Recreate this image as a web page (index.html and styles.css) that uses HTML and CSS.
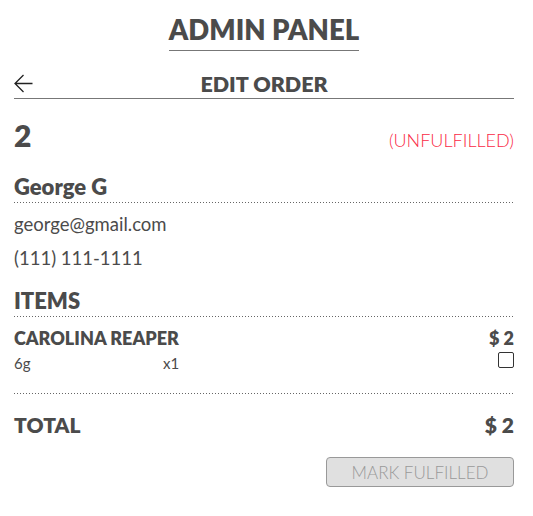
FILE: index.html
```html
<!DOCTYPE html>
<html>
<head>
<meta charset="utf-8">
<link rel="stylesheet" href="styles.css">
</head>
<body>
<div class="page">
  <div class="brand"><h1 class="brand-title">ADMIN PANEL</h1></div>
  <div class="topbar">
    <span class="back">
      <svg width="19" height="19" viewBox="0 0 19 19"><path d="M18.5 9.5H1M9.5 1L1 9.5l8.5 8.5" fill="none" stroke="#222" stroke-width="1.3"/></svg>
    </span>
    <h2 class="topbar-title">EDIT ORDER</h2>
  </div>
  <div class="order-row">
    <span class="order-id">2</span>
    <span class="status">(UNFULFILLED)</span>
  </div>
  <h3 class="section-title name-title">George G</h3>
  <div class="info email">george@gmail.com</div>
  <div class="info phone">(111) 111-1111</div>
  <h3 class="section-title items-title">ITEMS</h3>
  <div class="item">
    <div class="item-row">
      <span class="item-name">CAROLINA REAPER</span>
      <span class="item-price">$ 2</span>
    </div>
    <div class="item-sub">
      <span class="item-weight">6g</span>
      <span class="item-qty">x1</span>
      <span class="check"></span>
    </div>
  </div>
  <div class="total-row">
    <span>TOTAL</span>
    <span>$ 2</span>
  </div>
  <div class="actions">
    <button class="btn" disabled>MARK FULFILLED</button>
  </div>
</div>
</body>
</html>
```
FILE: styles.css
```css
html, body { margin: 0; padding: 0; background: #fff; }
body { font-family: "Lato", "Open Sans", sans-serif; color: #4b4b4b; }
.page { padding: 0 19px 0 14px; }
.brand { display: flex; justify-content: center; padding-top: 13px; }
.brand-title { margin: 0; font-size: 27.5px; font-weight: 800; line-height: 33px; padding-bottom: 4px; border-bottom: 1px solid #777; }
.topbar { position: relative; display: flex; justify-content: center; border-bottom: 1px solid #777; margin-top: 20px; padding-bottom: 1px; }
.back { position: absolute; left: 0; top: 3px; display: flex; }
.topbar-title { margin: 0; font-size: 21.5px; font-weight: 800; line-height: 26px; }
.order-row { display: flex; justify-content: space-between; align-items: baseline; margin-top: 18px; height: 36px; }
.order-id { font-size: 30px; font-weight: 800; line-height: 36px; }
.status { color: #fa2a45; font-size: 18px; font-weight: 300; line-height: 20px; }
.section-title { margin: 0; font-size: 22px; font-weight: 800; line-height: 26px; padding-bottom: 3px;
  background-image: linear-gradient(to right, #666 1px, transparent 1px);
  background-size: 3px 1px; background-repeat: repeat-x; background-position: 0 100%; }
.name-title { margin-top: 21px; }
.info { font-size: 18.5px; line-height: 30px; }
.email { margin-top: 6px; }
.phone { margin-top: 4px; }
.items-title { margin-top: 15px; }
.item { padding: 10px 0 22px;
  background-image: linear-gradient(to right, #666 1px, transparent 1px);
  background-size: 3px 1px; background-repeat: repeat-x; background-position: 0 100%; }
.item-row { display: flex; justify-content: space-between; }
.item-name, .item-price { font-size: 18px; font-weight: 800; line-height: 22px; }
.item-sub { display: flex; align-items: flex-start; font-size: 15px; line-height: 18px; }
.item-weight { width: 149px; padding-top: 5px; }
.item-qty { flex: 1; padding-top: 5px; }
.check { width: 14px; height: 14px; margin-top: 3px; border: 1.5px solid #333; border-radius: 2px; }
.total-row { display: flex; justify-content: space-between; font-size: 21px; font-weight: 800; margin-top: 18px; line-height: 26px; }
.actions { display: flex; justify-content: flex-end; margin-top: 19px; }
.btn { width: 188px; height: 30px; background: #e0e0e0; border: 1px solid #999; border-radius: 4px; color: #999; font-family: inherit; font-size: 17px; font-weight: 300; padding: 0; }
```
